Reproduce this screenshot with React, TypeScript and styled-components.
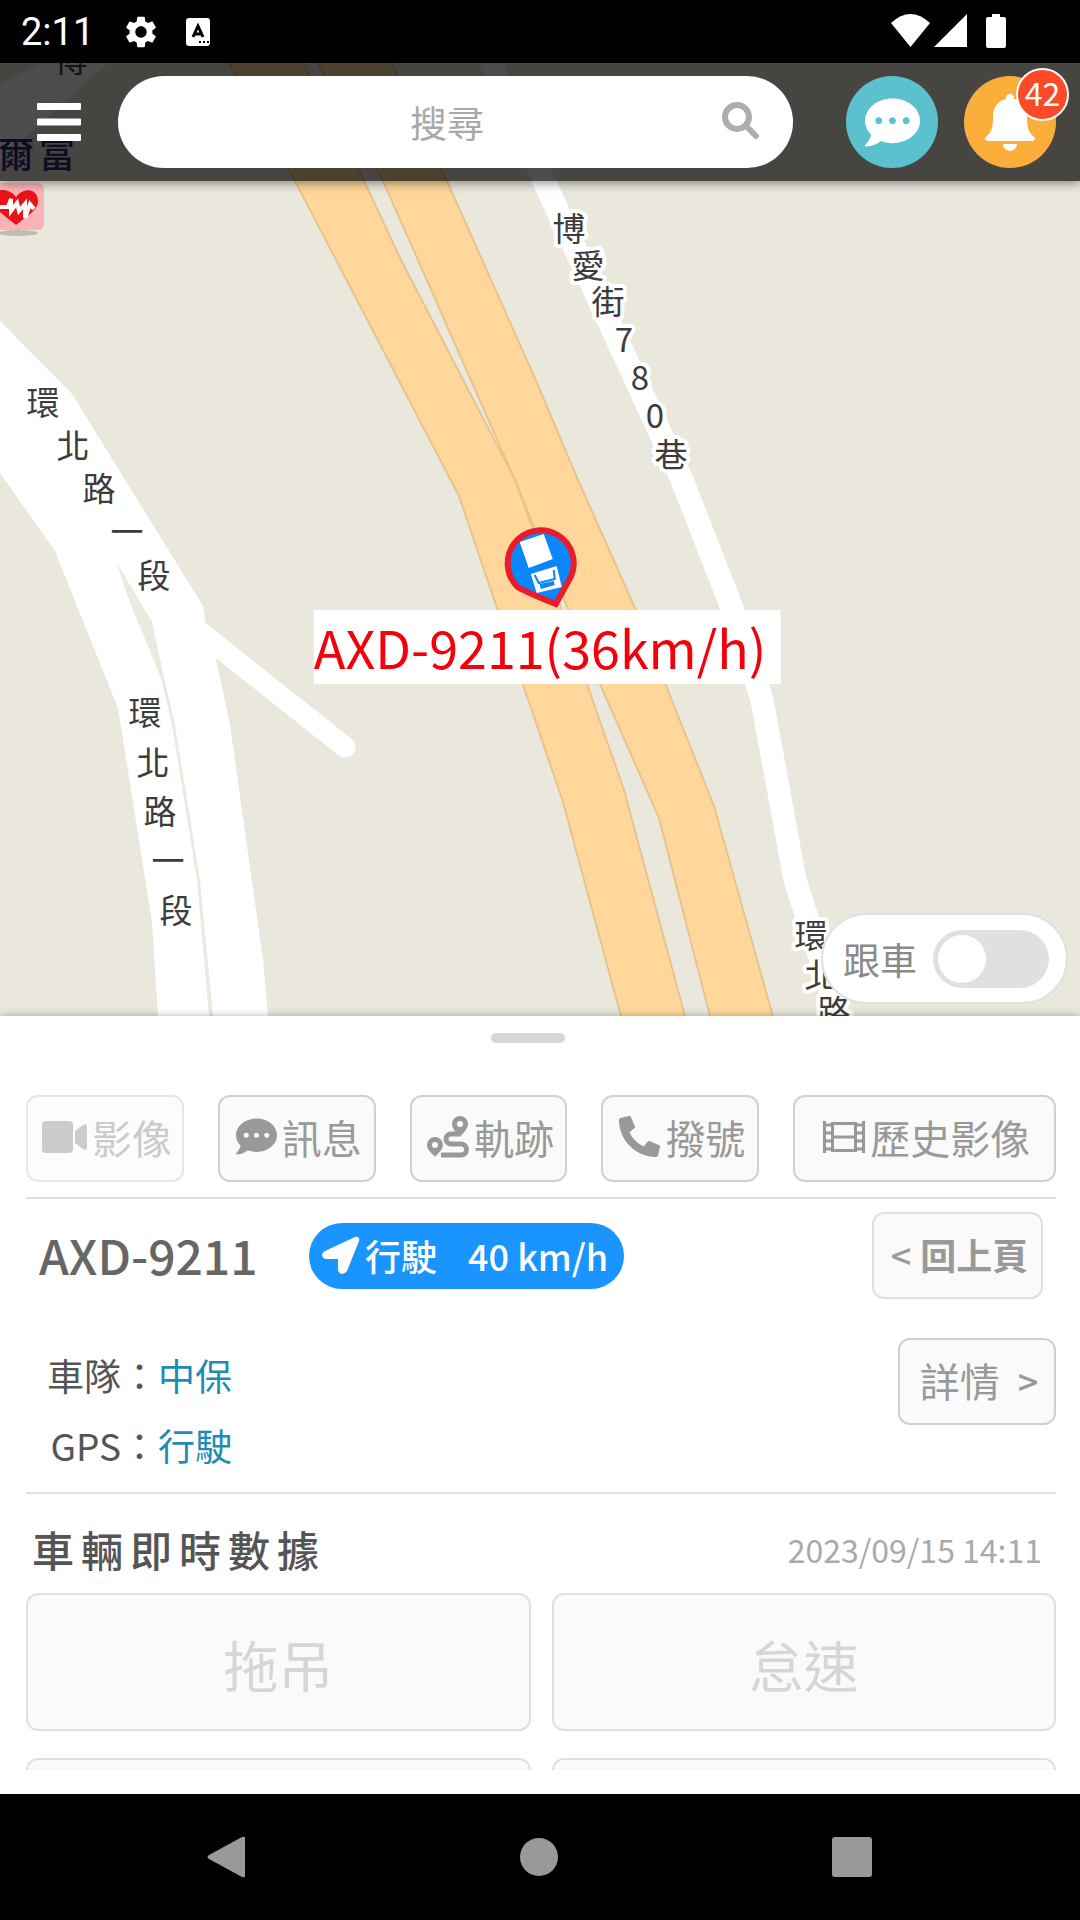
import React, { useState } from "react";
import styled, { createGlobalStyle } from "styled-components";
import { FaCommentDots, FaPhoneAlt } from "react-icons/fa";
import { MdSettings } from "react-icons/md";

const GlobalStyle = createGlobalStyle`
  * { box-sizing: border-box; }
  body {
    margin: 0;
    background: #fff;
    font-family: "Noto Sans CJK TC", "Noto Sans", sans-serif;
  }
  button, input { font: inherit; color: inherit; }
  svg { display: block; flex: none; }
`;

const Screen = styled.div`
  display: grid;
  grid-template-columns: minmax(0, 1fr);
  grid-template-rows: auto minmax(0, 953fr) minmax(0, 778fr) auto;
  height: 100vh;
`;

/* ---------- system bars ---------- */

const StatusBar = styled.div`
  display: flex;
  align-items: center;
  height: 63px;
  padding: 0 74px 0 21px;
  background: #000;
  color: #fff;
`;

const Clock = styled.time`
  font: 400 38px/44px Roboto, sans-serif;
  margin-right: 28px;
`;

const StatusNotices = styled.div`
  display: flex;
  align-items: center;
  gap: 26px;
  flex: 1;
`;

const StatusSignals = styled.div`
  display: flex;
  align-items: center;
  gap: 4px;
  padding-bottom: 2px;
  & > :last-child { margin-left: 15px; }
`;

const SystemNav = styled.nav`
  display: flex;
  align-items: center;
  justify-content: space-between;
  height: 126px;
  padding: 0 208px 0 206px;
  background: #000;
`;

const NavKey = styled.button`
  padding: 0;
  border: 0;
  background: none;
  color: #999;
`;

/* ---------- map ---------- */

const MapArea = styled.section`
  position: relative;
  overflow: hidden;
  background: #eae8dd;
`;

const MapDrawing = styled.svg`
  position: absolute;
  inset: 0;
  width: 100%;
  height: 100%;
`;

const Header = styled.header`
  position: relative;
  display: flex;
  align-items: center;
  height: 118px;
  padding: 0 24px 0 37px;
  background: rgba(0, 0, 0, 0.7);
  box-shadow: 0 2px 10px rgba(0, 0, 0, 0.45);
`;

const MenuButton = styled.button`
  margin-right: 37px;
  padding: 0;
  border: 0;
  background: none;
  color: #fff;
`;

const SearchBox = styled.form`
  display: flex;
  align-items: center;
  flex: 1;
  min-width: 0;
  height: 92px;
  margin-right: 53px;
  padding: 0 33px 0 54px;
  border-radius: 46px;
  background: #fff;
`;

const SearchInput = styled.input`
  flex: 1;
  min-width: 0;
  border: 0;
  outline: 0;
  background: none;
  font-size: 37px;
  line-height: 52px;
  text-align: center;
  color: #555;
  &::placeholder { color: #a9a9a9; opacity: 1; }
`;

const SearchSubmit = styled.button`
  padding: 0 0 4px;
  border: 0;
  background: none;
  color: #adadad;
`;

const RoundButton = styled.button<{ $color: string }>`
  position: relative;
  display: grid;
  place-items: center;
  width: 92px;
  height: 92px;
  padding: 0;
  border: 0;
  border-radius: 50%;
  background: ${(p) => p.$color};
  color: #fff;
  & + & { margin-left: 26px; }
`;

const Badge = styled.span`
  position: absolute;
  top: -8px;
  right: -13px;
  width: 53px;
  height: 53px;
  border: 2px solid #fff;
  border-radius: 50%;
  background: #fc4a26;
  font-size: 32px;
  line-height: 44px;
  text-align: center;
`;

const VehiclePin = styled.div`
  position: absolute;
  top: 461px;
  left: 50%;
  transform: translateX(-50%);
  display: flex;
  flex-direction: column;
  align-items: center;
  padding-left: 14px;
`;

const PinIcon = styled.svg`
  margin-right: 14px;
`;

const PinLabel = styled.div`
  padding-right: 14px;
  background: #fff;
  color: #f5000a;
  font-size: 52px;
  line-height: 74px;
  white-space: nowrap;
`;

const FollowToggle = styled.label`
  position: absolute;
  right: 12px;
  bottom: 12px;
  display: flex;
  align-items: center;
  gap: 16px;
  height: 91px;
  padding: 0 17px 0 20px;
  border: 2px solid #e0e0e0;
  border-radius: 46px;
  background: #fff;
  color: #8a8a8a;
  font-size: 37px;
  line-height: 52px;
`;

const Switch = styled.input`
  appearance: none;
  display: flex;
  align-items: center;
  width: 116px;
  height: 58px;
  margin: 0;
  padding: 5px;
  border-radius: 29px;
  background: #e0e0e0;
  &::before {
    content: "";
    width: 48px;
    height: 48px;
    border-radius: 50%;
    background: #fff;
  }
  &:checked {
    justify-content: flex-end;
    background: #1a94ff;
  }
`;

/* ---------- bottom sheet ---------- */

const Sheet = styled.main`
  position: relative;
  display: flex;
  flex-direction: column;
  min-height: 0;
  padding-bottom: 24px;
  background: #fff;
  box-shadow: 0 0 8px rgba(0, 0, 0, 0.3);
`;

const Handle = styled.div`
  flex: none;
  align-self: center;
  width: 74px;
  height: 10px;
  margin: 17px 24px 52px 0;
  border-radius: 5px;
  background: #d7d6dc;
`;

const SheetBody = styled.div`
  flex: 1;
  min-height: 0;
  overflow-y: auto;
  scrollbar-width: none;
  padding: 0 24px 0 26px;
`;

const Actions = styled.div`
  display: grid;
  grid-template-columns: repeat(4, 158fr) 263fr;
  gap: 34px;
  padding-bottom: 15px;
  border-bottom: 2px solid #e0e0e0;
`;

const OutlineButton = styled.button<{ $soft?: boolean; $bold?: boolean; $gap?: number; $width?: number }>`
  display: flex;
  align-items: center;
  justify-content: center;
  gap: ${(p) => p.$gap ?? 5}px;
  min-width: ${(p) => p.$width ?? 0}px;
  height: 87px;
  padding: 0 8px 4px 12px;
  border: 2px solid ${(p) => (p.$soft ? "#e0e0e0" : "#cfd0d2")};
  border-radius: 12px;
  background: #fafafa;
  color: #999;
  font-size: ${(p) => (p.$bold ? 36 : 40)}px;
  font-weight: ${(p) => (p.$bold ? 700 : 400)};
  line-height: 56px;
  white-space: nowrap;
  &:disabled { opacity: 0.5; }
`;

const Sign = styled.span`
  font-size: 36px;
  font-weight: 500;
`;

const VehicleRow = styled.div`
  display: flex;
  align-items: center;
  padding: 13px 13px 39px 13px;
`;

const Plate = styled.h1`
  margin: 0;
  width: 270px;
  padding-bottom: 4px;
  color: #666;
  font-size: 48px;
  font-weight: 500;
  line-height: 66px;
`;

const SpeedPill = styled.div`
  display: flex;
  align-items: center;
  gap: 5px;
  height: 66px;
  margin-right: auto;
  padding: 0 16px 2px 13px;
  border-radius: 33px;
  background: #1a94ff;
  color: #fff;
  font-size: 36px;
  font-weight: 500;
  line-height: 52px;
`;

const Speed = styled.span`
  margin-left: 26px;
`;

const InfoRow = styled.div`
  display: flex;
  align-items: flex-start;
  justify-content: space-between;
  padding-bottom: 11px;
  border-bottom: 2px solid #e0e0e0;
`;

const InfoList = styled.dl`
  display: grid;
  grid-template-columns: 132px auto;
  row-gap: 18px;
  margin: 0;
  padding-top: 11px;
  padding-bottom: 10px;
  font-size: 37px;
  line-height: 52px;
`;

const InfoName = styled.dt`
  text-align: right;
  color: #555;
`;

const InfoValue = styled.dd`
  margin: 0;
  color: #1f8cb4;
`;

const DataHead = styled.div`
  display: flex;
  align-items: center;
  justify-content: space-between;
  padding: 25px 14px 14px 6px;
`;

const DataTitle = styled.h2`
  margin: 0;
  color: #555;
  font-size: 42px;
  font-weight: 500;
  line-height: 60px;
  letter-spacing: 7px;
`;

const DataTime = styled.time`
  color: #aaa;
  font-size: 32px;
  line-height: 60px;
`;

const Tiles = styled.div`
  display: grid;
  grid-template-columns: 1fr 1fr;
  gap: 27px 21px;
`;

const Tile = styled.div`
  display: flex;
  align-items: center;
  justify-content: center;
  height: 138px;
  padding-top: 2px;
  border: 2px solid #e0e0e0;
  border-radius: 12px;
  background: #fafafa;
  color: #d6d6d6;
  font-size: 55px;
  line-height: 78px;
`;

/* ---------- drawings ---------- */

type Label = [string, number, number];

const plainLabels: Label[] = [
  ["環", 43, 403], ["北", 73, 446], ["路", 99, 489], ["一", 127, 532], ["段", 154, 576],
  ["環", 145, 713], ["北", 153, 763], ["路", 160, 812], ["一", 168, 861], ["段", 176, 911],
  ["博", 71, 60],
  ["博", 569, 229], ["愛", 588, 266], ["街", 608, 302], ["7", 624, 340], ["8", 640, 378],
  ["0", 655, 416], ["巷", 671, 455],
  ["環", 811, 936], ["北", 821, 975], ["路", 834, 1012],
];

const RoadMap = () => (
  <MapDrawing viewBox="0 63 1080 953" preserveAspectRatio="xMidYMid slice" aria-hidden="true">
    <rect y="63" width="1080" height="953" fill="#eae8dd" />
    <g fill="#fff">
      <path d="M0 84 42 63H108L0 160Z" />
      <path d="M0 321 72 394 203 606 206 628 217 664 230 725 263 960 268 1016H158L152 922 118 708 55 551 0 473Z" />
    </g>
    <path d="M117 563 152 622 165 682 175 725 200 880 213 1016H209L197 880 172 725 161 678 127 595Z" fill="#eceadf" />
    <g fill="none" stroke="#fff" strokeLinecap="round" strokeLinejoin="round">
      <path d="M200 632 345 747" strokeWidth="21" />
      <path d="M488 55 544 181 682 480 732 608 762 700 795 880 840 1020" strokeWidth="23" />
    </g>
    <g fill="#ffd79b" stroke="#e8c48c" strokeWidth="2">
      <path d="M227 60 295 181 459 496 497 608 563 802 622 1020H686L624 790 587 684 555 590 515 480 401 260 358 168 301 60Z" />
      <path d="M316 60 383 181 418 260 515 480 560 590 600 684 659 818 711 1020H774L714 806 635 608 578 480 537 383 447 181 390 60Z" />
    </g>
    <g
      fontFamily="Noto Sans CJK TC, sans-serif"
      fontSize="33"
      textAnchor="middle"
      stroke="#fff"
      strokeWidth="8"
      strokeLinejoin="round"
      paintOrder="stroke"
      fill="#3c3c3c"
    >
      {plainLabels.map(([text, x, y]) => (
        <text key={`${x}-${y}`} x={x} y={y + 12}>{text}</text>
      ))}
      <g fill="#28287c" stroke="none" fontWeight="500" fontSize="36">
        <text x="16" y="168">爾</text>
        <text x="57" y="168">富</text>
      </g>
    </g>
    <ellipse cx="18" cy="233" rx="20" ry="3" fill="#bdbbb5" />
    <rect x="-20" y="183" width="64" height="47" rx="6" fill="#fbb3b8" />
    <path d="M16 225C4 215-8 208-8 199c0-10 16-13 24-2 8-11 22-8 22 4 0 9-10 14-22 24Z" fill="#ea1216" />
    <path d="M0 207h8l3-8v12l6-8 2 8 6-7v14l5-14 4 5" fill="none" stroke="#fff" strokeWidth="4" />
  </MapDrawing>
);

const TruckPin = () => (
  <PinIcon width="76" height="86" viewBox="0 0 76 86" role="img" aria-label="AXD-9211">
    <path d="M54 80 69 53A33 33 0 1 0 16 63Q24 68 54 80Z" fill="#0a87ff" stroke="#ea1c2c" strokeWidth="6" />
    <path d="M18 18 42 10 51 35 27 44Z" fill="#fff" />
    <path d="M29 50 55 42 60 63 35 69Z" fill="#fff" />
    <path d="M33 51 37 59 53 55 52 46" fill="none" stroke="#0a87ff" strokeWidth="2" />
    <path d="M38 60 52 57 53 61 39 65Z" fill="#0a87ff" />
  </PinIcon>
);

const BellIcon = () => (
  <svg width="50" height="57" viewBox="0 0 50 57" fill="currentColor" aria-hidden="true">
    <path d="M25 0c-3 0-4 2-4 5C12 7 8 14 8 23c0 12-2 15-6 19-4 3-1 5 1 5h44c2 0 5-2 1-5-4-4-6-7-6-19 0-9-4-16-13-18 0-3-1-5-4-5Z" />
    <path d="M18 50h14c0 9-14 9-14 0Z" />
  </svg>
);

const ArrowIcon = () => (
  <svg width="38" height="38" viewBox="0 0 38 38" fill="currentColor" aria-hidden="true">
    <path d="M33 1q5-1 4 4L25 35q-2 3-5 3-4-1-4-5V23H4q-4-1-4-4 0-2 3-4Z" />
  </svg>
);

const VideoIcon = () => (
  <svg width="45" height="32" viewBox="0 0 45 32" fill="currentColor" aria-hidden="true">
    <rect width="31" height="32" rx="4" />
    <path d="M33 10 41 4q4-2 4 1v22q0 3-4 1l-8-6Z" />
  </svg>
);

const TrackIcon = () => (
  <svg width="42" height="42" viewBox="0 0 42 42" aria-hidden="true">
    <path d="M33 18H24a5 5 0 0 0 0 10h10a5 5 0 0 1 0 11H14" fill="none" stroke="currentColor" strokeWidth="5" />
    <g fill="currentColor" fillRule="evenodd">
      <path d="M33 0a8 8 0 0 1 8 8c0 5-5 9-8 13-3-4-8-8-8-13a8 8 0 0 1 8-8Zm0 5a3 3 0 1 0 0 6 3 3 0 0 0 0-6Z" />
      <path d="M8 21a8 8 0 0 1 8 8c0 5-5 8-8 12-3-4-8-7-8-12a8 8 0 0 1 8-8Zm0 5a3 3 0 1 0 0 6 3 3 0 0 0 0-6Z" />
    </g>
  </svg>
);

const FilmIcon = () => (
  <svg width="42" height="32" viewBox="0 0 42 32" fill="none" stroke="currentColor" strokeWidth="3" aria-hidden="true">
    <path d="M1.5 0v32M40.500 0v32M9.500 1v30M32.500 1v30" />
    <path d="M8 2.500h26M8 16h26M8 29.500h26M1 4h8M1 12h8M1 20h8M1 28h8M33 4h8M33 12h8M33 20h8M33 28h8" />
  </svg>
);

export default function App() {
  const [follow, setFollow] = useState(false);

  return (
    <>
      <GlobalStyle />
      <Screen>
        <StatusBar>
          <Clock>2:11</Clock>
          <StatusNotices>
            <MdSettings size={38} />
            <svg width="24" height="28" viewBox="0 0 24 28" aria-hidden="true">
              <rect width="24" height="28" rx="3" fill="#fff" />
              <path d="M7 19 12 8l5 11M9 16h6" fill="none" stroke="#000" strokeWidth="3" />
              <path d="M13 24h2m2 0h2m2 0h2" stroke="#000" strokeWidth="2" />
            </svg>
          </StatusNotices>
          <StatusSignals>
            <svg width="39" height="34" viewBox="0 0 39 34" fill="#fff" aria-hidden="true">
              <path d="M0 9Q19.500-9 39 9L19.500 33Z" />
            </svg>
            <svg width="33" height="34" viewBox="0 0 33 34" fill="#fff" aria-hidden="true">
              <path d="M33 0v33H0Z" />
            </svg>
            <svg width="20" height="34" viewBox="0 0 20 34" fill="#fff" aria-hidden="true">
              <path d="M6 0h8v3h4q2 0 2 2v27q0 2-2 2H2q-2 0-2-2V5q0-2 2-2h4Z" />
            </svg>
          </StatusSignals>
        </StatusBar>

        <MapArea>
          <RoadMap />
          <VehiclePin>
            <TruckPin />
            <PinLabel>AXD-9211(36km/h)</PinLabel>
          </VehiclePin>
          <Header>
            <MenuButton type="button" aria-label="選單">
              <svg width="44" height="38" viewBox="0 0 44 38" fill="currentColor" aria-hidden="true">
                <rect width="44" height="7" rx="1" />
                <rect y="15.500" width="44" height="7" rx="1" />
                <rect y="31" width="44" height="7" rx="1" />
              </svg>
            </MenuButton>
            <SearchBox role="search" onSubmit={(e) => e.preventDefault()}>
              <SearchInput type="text" placeholder="搜尋" aria-label="搜尋" />
              <SearchSubmit type="submit" aria-label="搜尋">
                <svg width="38" height="40" viewBox="0 0 38 40" fill="none" stroke="currentColor" aria-hidden="true">
                  <circle cx="15" cy="17" r="12" strokeWidth="6" />
                  <path d="M25 27l9 9" strokeWidth="6" strokeLinecap="round" />
                </svg>
              </SearchSubmit>
            </SearchBox>
            <RoundButton type="button" $color="#5cc1cf" aria-label="訊息">
              <FaCommentDots size={55} />
            </RoundButton>
            <RoundButton type="button" $color="#fcae3a" aria-label="通知">
              <BellIcon />
              <Badge>42</Badge>
            </RoundButton>
          </Header>
          <FollowToggle>
            跟車
            <Switch type="checkbox" role="switch" checked={follow} onChange={(e) => setFollow(e.target.checked)} />
          </FollowToggle>
        </MapArea>

        <Sheet>
          <Handle />
          <SheetBody>
            <Actions>
              <OutlineButton type="button" disabled><VideoIcon />影像</OutlineButton>
              <OutlineButton type="button"><FaCommentDots size={41} />訊息</OutlineButton>
              <OutlineButton type="button"><TrackIcon />軌跡</OutlineButton>
              <OutlineButton type="button"><FaPhoneAlt size={41} />撥號</OutlineButton>
              <OutlineButton type="button"><FilmIcon />歷史影像</OutlineButton>
            </Actions>

            <VehicleRow>
              <Plate>AXD-9211</Plate>
              <SpeedPill>
                <ArrowIcon />
                <span>行駛</span>
                <Speed>40 km/h</Speed>
              </SpeedPill>
              <OutlineButton type="button" $soft $bold $gap={9} $width={171}><Sign>&lt;</Sign>回上頁</OutlineButton>
            </VehicleRow>

            <InfoRow>
              <InfoList>
                <InfoName>車隊：</InfoName>
                <InfoValue>中保</InfoValue>
                <InfoName>GPS：</InfoName>
                <InfoValue>行駛</InfoValue>
              </InfoList>
              <OutlineButton type="button" $gap={18} $width={158}>詳情<Sign>&gt;</Sign></OutlineButton>
            </InfoRow>

            <DataHead>
              <DataTitle>車輛即時數據</DataTitle>
              <DataTime dateTime="2023-09-15T14:11">2023/09/15 14:11</DataTime>
            </DataHead>
            <Tiles>
              <Tile>拖吊</Tile>
              <Tile>怠速</Tile>
              <Tile />
              <Tile />
            </Tiles>
          </SheetBody>
        </Sheet>

        <SystemNav aria-label="系統">
          <NavKey type="button" aria-label="返回">
            <svg width="40" height="44" viewBox="0 0 40 44" fill="currentColor" aria-hidden="true">
              <path d="M39 3v38q0 2-3 1L3 24q-3-2 0-4L36 2q3-1 3 1Z" />
            </svg>
          </NavKey>
          <NavKey type="button" aria-label="首頁">
            <svg width="38" height="38" viewBox="0 0 38 38" fill="currentColor" aria-hidden="true">
              <circle cx="19" cy="19" r="19" />
            </svg>
          </NavKey>
          <NavKey type="button" aria-label="最近使用">
            <svg width="40" height="40" viewBox="0 0 40 40" fill="currentColor" aria-hidden="true">
              <rect width="40" height="40" rx="3" />
            </svg>
          </NavKey>
        </SystemNav>
      </Screen>
    </>
  );
}
